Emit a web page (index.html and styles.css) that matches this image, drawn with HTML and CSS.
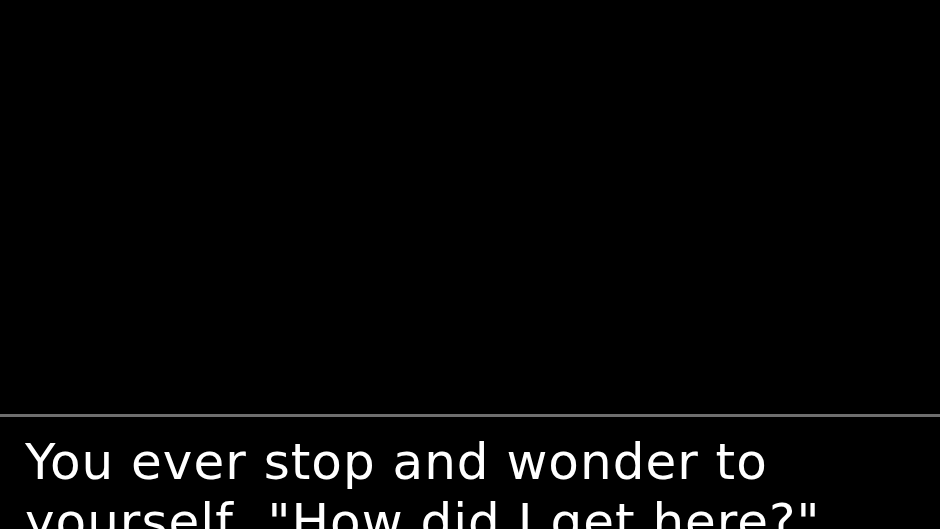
FILE: index.html
```html
<!DOCTYPE html>
<html lang="en">
<head>
<meta charset="utf-8">
<title>Dialogue</title>
<link rel="stylesheet" href="styles.css">
</head>
<body>
<main class="screen">
  <section class="stage"></section>
  <section class="dialog">
    <p class="dialog-text">You ever stop and wonder to<br>yourself, "How did I get here?"</p>
  </section>
</main>
</body>
</html>
```
FILE: styles.css
```css
html, body {
  margin: 0;
  padding: 0;
  background: #000;
  overflow: hidden;
}

.screen {
  width: 940px;
  height: 529px;
  display: flex;
  flex-direction: column;
  background: #000;
}

.stage {
  height: 414px;
  flex: none;
  background: #000;
}

.dialog {
  flex: 1;
  border-top: 3px solid #6e6e6e;
  padding: 15px 0 0 25px;
  overflow: hidden;
}

.dialog-text {
  margin: 0;
  color: #fff;
  font-family: "DejaVu Sans", sans-serif;
  font-size: 50px;
  line-height: 60px;
  letter-spacing: 1px;
  white-space: nowrap;
}
```
